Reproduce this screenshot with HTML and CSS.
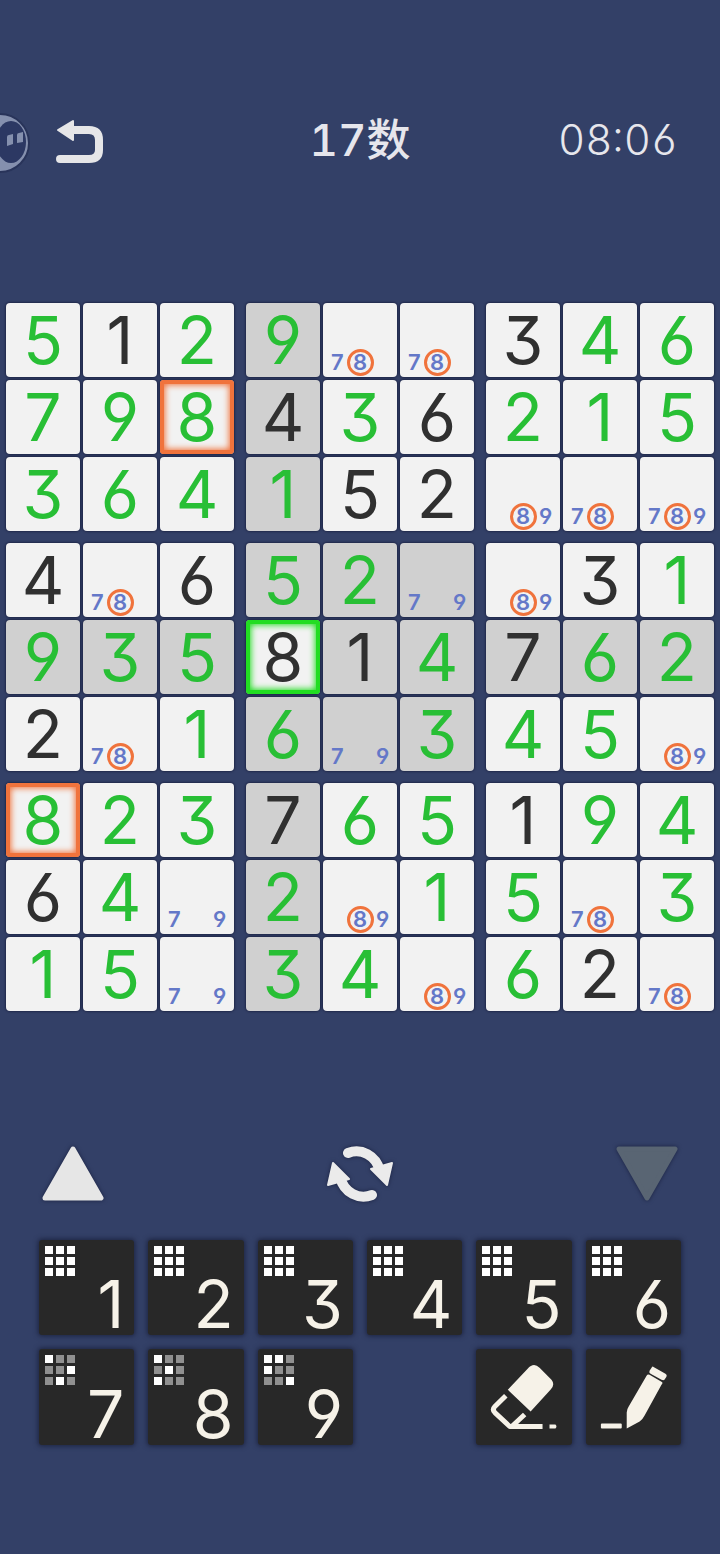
FILE: index.html
```html
<!DOCTYPE html>
<html lang="zh-CN">
<head>
    <meta charset="UTF-8">
    <meta name="viewport" content="width=device-width, initial-scale=1.0">
    <title>17数</title>
    <link rel="stylesheet" href="styles.css">
</head>
<body>
    <button class="bubble" aria-label="Assistant">
        <svg width="32" height="62" viewBox="0 0 32 62">
            <circle cx="0" cy="31" r="29" fill="#8590ae" stroke="#29345a" stroke-width="2"/>
            <ellipse cx="11" cy="30" rx="15" ry="21" fill="#2c3863"/>
            <path d="M7 25q0-2 2-2l4-1v10l-6 2zM17 23q0-2 2-2l4-1v10l-6 1z" fill="#8590ae"/>
        </svg>
    </button>

    <header class="topbar">
        <button class="back" aria-label="Back">
            <svg width="48" height="46" viewBox="0 0 48 46">
                <path d="M14 11H33Q43 11 43 21V31Q43 40 33 40H4" fill="none" stroke="#e6e6e8" stroke-width="8" stroke-linecap="round"/>
                <path d="M2 11L17 2V21Z" fill="#e6e6e8" stroke="#e6e6e8" stroke-width="2" stroke-linejoin="round"/>
            </svg>
        </button>
        <h1 class="title">17数</h1>
        <time class="timer">08:06</time>
    </header>

    <main>
        <div class="board" id="board"></div>

        <div class="actions">
            <button aria-label="Up">
                <svg width="62" height="56" viewBox="0 0 62 56">
                    <path d="M31 3L59 52H3Z" fill="#e6e6e6" stroke="#e6e6e6" stroke-width="5" stroke-linejoin="round"/>
                </svg>
            </button>
            <button aria-label="Refresh">
                <svg width="68" height="58" viewBox="0 0 68 58">
                    <path d="M22 8C35 3 50 10 54 26M46 50C33 55 18 48 14 32" fill="none" stroke="#ebebeb" stroke-width="10" stroke-linecap="round"/>
                    <path d="M45 24L66 18L61 40ZM23 34L2 40L7 18Z" fill="#ebebeb" stroke="#ebebeb" stroke-width="2" stroke-linejoin="round"/>
                </svg>
            </button>
            <button aria-label="Down" disabled>
                <svg width="62" height="56" viewBox="0 0 62 56">
                    <path d="M31 52L59 3H3Z" fill="#596573" stroke="#596573" stroke-width="5" stroke-linejoin="round"/>
                </svg>
            </button>
        </div>

        <div class="keypad" id="keypad">
            <button class="key tool eraser" aria-label="Erase">
                <svg viewBox="0 0 96 96">
                    <path d="M32 41L52 20Q58 13 64 19L76 31Q80 36 75 41L55 63Z" fill="#f6f2e8"/>
                    <path d="M30 47L19 58Q16 61 19 64L34 78H67M36 78L49 66" fill="none" stroke="#f6f2e8" stroke-width="5" stroke-linejoin="round"/>
                    <path d="M74 76H80Q82 78 80 80H74Z" fill="#f6f2e8"/>
                </svg>
            </button>
            <button class="key tool" aria-label="Pencil">
                <svg viewBox="0 0 96 96">
                    <path d="M64 26L76 33Q78 34 76 36L59 67Q57 71 54 73L41 80V64Q41 61 43 58L61 27Q62 25 64 26Z" fill="#f6f2e8"/>
                    <path d="M68 18L80 25Q82 26 81 28L79 31Q78 32 76 31L65 25Q63 24 64 22L66 19Q67 17 68 18Z" fill="#f6f2e8"/>
                    <rect x="15" y="75" width="21" height="5" rx="1" fill="#f6f2e8"/>
                </svg>
            </button>
        </div>
    </main>

    <script src="script.js"></script>
</body>
</html>
```
FILE: styles.css
```css
*{
    box-sizing: border-box;
}
body{
    margin: 0;
    min-height: 100vh;
    padding-top: 112px;
    background-color: #334067;
    font-family: Inter, "Noto Sans CJK SC", sans-serif;
    /* open six and nine, flat top three */
    font-feature-settings: "cv03", "cv04", "cv09";
}
button{
    padding: 0;
    border: none;
    background: none;
    font: inherit;
    font-feature-settings: inherit;
    color: inherit;
}
svg{
    display: block;
}
.bubble{
    position: absolute;
    left: 0;
    top: 112px;
}
.topbar{
    display: grid;
    grid-template-columns: 1fr auto 1fr;
    align-items: center;
    height: 56px;
    padding: 0 42px;
    color: #e6e6ec;
    font-variant-numeric: tabular-nums;
}
.back{
    justify-self: start;
    padding: 4px 14px 0;
}
.title{
    margin: 0;
    font-size: 44px;
    line-height: 52px;
    font-weight: 500;
}
.timer{
    justify-self: end;
    font-size: 42px;
    line-height: 52px;
    font-weight: 300;
}
.board{
    display: grid;
    grid-template-columns: repeat(3, minmax(0, 1fr));
    gap: 12px;
    margin-top: 135px;
    padding: 0 6px;
}
.box{
    display: grid;
    grid-template-columns: repeat(3, minmax(0, 1fr));
    gap: 3px;
}
.cell{
    display: flex;
    align-items: center;
    justify-content: center;
    min-height: 0;
    aspect-ratio: 1;
    padding-bottom: 1px;
    border-radius: 4px;
    background-color: #f2f2f2;
    box-shadow: 0 0 2px 1px #20284a;
    color: #28bf35;
    font-size: 66px;
    line-height: 72px;
}
.cell.given{
    color: #303030;
}
.cell.near{
    background-color: #d0d0d0;
}
.cell.same{
    box-shadow: 0 0 2px 1px #20284a, inset 0 0 0 4px #f0733c, inset 0 0 6px 5px #f0733c;
}
.cell.selected{
    box-shadow: 0 0 2px 1px #20284a, inset 0 0 0 4px #22dd22, inset 0 0 6px 5px #22dd22;
}
.cell.notes{
    display: grid;
    grid-template-columns: repeat(3, minmax(0, 1fr));
    grid-template-rows: repeat(3, minmax(0, 1fr));
    padding: 3px;
    color: #6478c8;
    font-size: 22px;
    line-height: 21px;
    font-weight: 600;
}
.note{
    grid-row: 3;
    place-self: center;
}
.n7{
    grid-column: 1;
}
.n8{
    grid-column: 2;
    width: 27px;
    height: 27px;
    border: 3px solid #f0733c;
    border-radius: 50%;
}
.n9{
    grid-column: 3;
}
.actions{
    display: flex;
    align-items: center;
    justify-content: space-between;
    margin-top: 134px;
    padding: 0 42px;
}
.actions svg{
    filter: drop-shadow(0 0 2px #1a2140);
}
.keypad{
    display: grid;
    grid-template-columns: repeat(6, 1fr);
    gap: 14px;
    margin-top: 37px;
    padding: 0 39px;
}
.key{
    display: flex;
    flex-direction: column;
    justify-content: space-between;
    aspect-ratio: 1;
    padding: 6px;
    border-radius: 3px;
    background-color: #282828;
    box-shadow: 0 0 5px 1px #1c2340;
    color: #f6f2e8;
}
.digit{
    align-self: flex-end;
    padding-right: 4px;
    font-size: 66px;
    line-height: 50px;
}
.dots{
    display: grid;
    grid-template-columns: repeat(3, 8px);
    gap: 3px;
}
.dot{
    height: 8px;
    background-color: #909090;
}
.dot.on{
    background-color: #fff;
}
.tool{
    padding: 0;
}
.tool svg{
    width: 100%;
}
.eraser{
    grid-column: 5;
}
```
FILE: script.js
```js
// g = given number, n = pencil notes, plain digit = entered by the player
const rows = [
    "5 g1 2 9 n78 n78 g3 4 6",
    "7 9 8 g4 3 g6 2 1 5",
    "3 6 4 1 g5 g2 n89 n78 n789",
    "g4 n78 g6 5 2 n79 n89 g3 1",
    "9 3 5 g8 g1 4 g7 6 2",
    "g2 n78 1 6 n79 3 4 5 n89",
    "8 2 3 g7 6 5 g1 9 4",
    "g6 4 n79 2 n89 1 5 n78 3",
    "1 5 n79 3 4 n89 6 g2 n78"
].map(row => row.split(" "));
const selected = { row: 4, col: 3 };
const board = document.getElementById("board");
const keypad = document.getElementById("keypad");

function boxOf(row, col) {
    return Math.floor(row / 3) * 3 + Math.floor(col / 3);
}

for (let b = 0; b < 9; b++) {
    const box = document.createElement("div");
    box.className = "box";
    for (let i = 0; i < 9; i++) {
        const row = Math.floor(b / 3) * 3 + Math.floor(i / 3);
        const col = (b % 3) * 3 + i % 3;
        const value = rows[row][col];
        const cell = document.createElement("button");
        cell.className = "cell";
        if (row === selected.row && col === selected.col) {
            cell.classList.add("selected");
        } else if (row === selected.row || col === selected.col || b === boxOf(selected.row, selected.col)) {
            cell.classList.add("near");
        } else if (value === "8") {
            cell.classList.add("same");
        }
        if (value[0] === "n") {
            cell.classList.add("notes");
            for (const n of value.slice(1)) {
                const note = document.createElement("span");
                note.className = "note n" + n;
                note.textContent = n;
                cell.appendChild(note);
            }
        } else {
            if (value[0] === "g") {
                cell.classList.add("given");
            }
            cell.textContent = value.replace("g", "");
        }
        box.appendChild(cell);
    }
    board.appendChild(box);
}

// which of the nine boxes already hold the number
const filled = { 7: "100001010", 8: "100010100", 9: "110100001" };
const eraser = keypad.querySelector(".eraser");
for (let n = 1; n <= 9; n++) {
    const key = document.createElement("button");
    key.className = "key";
    const dots = document.createElement("span");
    dots.className = "dots";
    for (const on of filled[n] || "111111111") {
        const dot = document.createElement("span");
        dot.className = on === "1" ? "dot on" : "dot";
        dots.appendChild(dot);
    }
    const digit = document.createElement("span");
    digit.className = "digit";
    digit.textContent = n;
    key.append(dots, digit);
    keypad.insertBefore(key, eraser);
}
```
